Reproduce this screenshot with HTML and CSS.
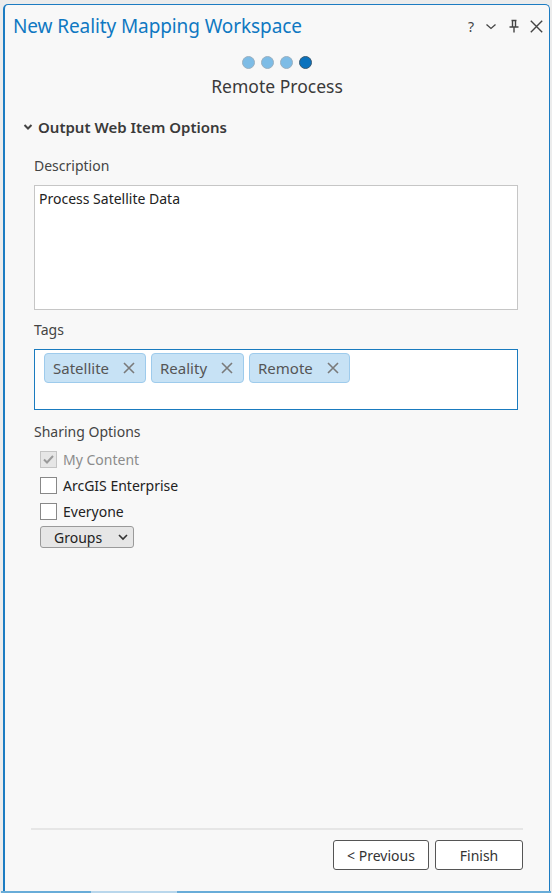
FILE: index.html
```html
<!DOCTYPE html>
<html lang="en">
<head>
  <meta charset="UTF-8" />
  <title>New Reality Mapping Workspace</title>
  <link rel="stylesheet" href="styles.css">
</head>
<body>
  <div class="pane">
    <header class="pane-head">
      <h1 class="pane-title">New Reality Mapping Workspace</h1>
      <div class="pane-tools">
        <span class="tool tool-help">?</span>
        <svg class="tool tool-menu" width="10" height="12" viewBox="0 0 10 12"><path d="M0.5 4.5 L5 8.5 L9.5 4.5" fill="none" stroke="#444" stroke-width="1.3"/></svg>
        <svg class="tool tool-pin" width="10" height="14" viewBox="0 0 10 14"><path d="M2.5 1.5 H7.5 M3.5 1.5 V8 M6.5 1.5 V8 M0.5 8 H9.5 M5 8 V13.5" fill="none" stroke="#444" stroke-width="1.4"/></svg>
        <svg class="tool tool-close" width="13" height="13" viewBox="0 0 13 13"><path d="M0.8 0.8 L12.2 12.2 M12.2 0.8 L0.8 12.2" fill="none" stroke="#444" stroke-width="1.4"/></svg>
      </div>
    </header>

    <div class="steps">
      <span class="dot"></span>
      <span class="dot"></span>
      <span class="dot"></span>
      <span class="dot current"></span>
    </div>
    <div class="step-name">Remote Process</div>

    <section class="group">
      <div class="group-head">
        <svg width="10" height="8" viewBox="0 0 10 8"><path d="M1.5 2 L5 5.5 L8.5 2" fill="none" stroke="#444" stroke-width="2"/></svg>
        Output Web Item Options
      </div>

      <div class="field">
        <label class="field-label">Description</label>
        <div class="textbox">Process Satellite Data</div>
      </div>

      <div class="field">
        <label class="field-label">Tags</label>
        <div class="tagbox">
          <span class="tag">Satellite <svg class="tag-x" width="12" height="12" viewBox="0 0 12 12"><path d="M1 1 L11 11 M11 1 L1 11" fill="none" stroke="#7a7a7a" stroke-width="1.6"/></svg></span>
          <span class="tag">Reality <svg class="tag-x" width="12" height="12" viewBox="0 0 12 12"><path d="M1 1 L11 11 M11 1 L1 11" fill="none" stroke="#7a7a7a" stroke-width="1.6"/></svg></span>
          <span class="tag">Remote <svg class="tag-x" width="12" height="12" viewBox="0 0 12 12"><path d="M1 1 L11 11 M11 1 L1 11" fill="none" stroke="#7a7a7a" stroke-width="1.6"/></svg></span>
        </div>
      </div>

      <div class="field sharing">
        <label class="field-label">Sharing Options</label>
        <div class="check disabled">
          <span class="box"><svg width="13" height="13" viewBox="0 0 13 13"><path d="M2 6.5 L5 9.5 L11 3" fill="none" stroke="#9a9a9a" stroke-width="2"/></svg></span>
          My Content
        </div>
        <div class="check"><span class="box"></span>ArcGIS Enterprise</div>
        <div class="check"><span class="box"></span>Everyone</div>
        <div class="select">
          Groups
          <svg width="10" height="8" viewBox="0 0 10 8"><path d="M1 2 L5 6 L9 2" fill="none" stroke="#333" stroke-width="1.6"/></svg>
        </div>
      </div>
    </section>

    <footer class="pane-foot">
      <button class="btn btn-prev">&lt; Previous</button>
      <button class="btn btn-finish">Finish</button>
    </footer>
  </div>
  <div class="tabstrip">
    <span class="tab"></span>
    <span class="tab active"></span>
    <span class="tab rest"></span>
  </div>
</body>
</html>
```

FILE: styles.css
```css
body {
  margin: 0;
  height: 893px;
  background: #ececec;
  font-family: 'Noto Sans', 'Open Sans', sans-serif;
  font-size: 14px;
  color: #333;
  display: flex;
  flex-direction: column;
  overflow: hidden;
}
.pane {
  margin: 4px 2px 0 3px;
  flex: 1;
  background: #f8f8f8;
  border: 1px solid #1c7cc2;
  border-bottom: none;
  border-left-width: 2px;
  border-radius: 5px 5px 0 0;
  display: flex;
  flex-direction: column;
}
.tabstrip {
  display: flex;
  height: 2px;
  margin: 0 1px;
}
.tab { width: 90px; background: #68acd8; }
.tab.active { width: 86px; background: #b9d7ec; }
.tab.rest { flex: 1; }

/* header */
.pane-head {
  display: flex;
  align-items: center;
  justify-content: space-between;
  height: 42px;
  padding: 0 6px 0 8px;
}
.pane-title {
  margin: 0;
  font-size: 19px;
  font-weight: 400;
  color: #0f78c2;
  letter-spacing: -0.1px;
}
.pane-tools {
  display: flex;
  align-items: center;
}
.tool-help {
  font-size: 14px;
  color: #444;
}
.tool-menu { margin-left: 12px; }
.tool-pin { margin-left: 13px; }
.tool-close { margin-left: 11px; }

/* step dots */
.steps {
  display: flex;
  justify-content: center;
  gap: 6px;
  margin-top: 9px;
}
.dot {
  width: 11px;
  height: 11px;
  border-radius: 50%;
  background: #7dbce6;
  border: 1px solid #9ab0c0;
}
.dot.current {
  background: #0a72bd;
  border-color: #3a5a72;
}
.step-name {
  text-align: center;
  font-size: 17.5px;
  color: #3a3a3a;
  margin-top: 5px;
}

/* option group */
.group {
  padding: 0 31px 0 18px;
  flex: 1;
}
.group-head {
  display: flex;
  align-items: center;
  gap: 5px;
  margin-top: 19px;
  font-size: 15px;
  font-weight: 600;
  color: #3a3a3a;
}
.field {
  padding-left: 11px;
  margin-top: 19px;
}
.field + .field { margin-top: 10px; }
.field.sharing { margin-top: 12px; }
.field-label {
  display: block;
  color: #444;
  margin-bottom: 10px;
}
.sharing .field-label { margin-bottom: 5px; }
.textbox {
  height: 117px;
  background: #fff;
  border: 1px solid #c6c6c6;
  padding: 3px 4px;
  color: #222;
}
.tagbox {
  height: 53px;
  background: #fff;
  border: 1px solid #1a7bbf;
  padding: 3px 9px;
  display: flex;
  align-items: flex-start;
  gap: 5px;
}
.tag {
  display: flex;
  align-items: center;
  gap: 14px;
  height: 28px;
  padding: 0 10px 0 8px;
  background: #c7e2f5;
  border: 1px solid #9ecbec;
  border-radius: 4px;
  font-size: 15px;
  color: #555;
}
.check {
  display: flex;
  align-items: center;
  gap: 6px;
  height: 26px;
  padding-left: 6px;
  color: #222;
}
.check.disabled { color: #8c8c8c; }
.box {
  width: 15px;
  height: 15px;
  border: 1px solid #888;
  background: #fff;
  display: flex;
  align-items: center;
  justify-content: center;
}
.check.disabled .box {
  background: #e6e6e6;
  border-color: #c4c4c4;
}
.select {
  display: inline-flex;
  align-items: center;
  gap: 16px;
  height: 20px;
  margin: 2px 0 0 6px;
  padding: 0 5px 0 13px;
  background: #e6e6e6;
  border: 1px solid #9a9a9a;
  border-radius: 3px;
  color: #222;
}

/* footer buttons */
.pane-foot {
  display: flex;
  justify-content: flex-end;
  gap: 6px;
  margin: 0 26px;
  padding: 10px 0 21px;
  border-top: 2px solid #e6e6e6;
}
.btn {
  font-family: inherit;
  font-size: 14px;
  color: #333;
  background: #fff;
  border: 1px solid #555;
  border-radius: 3px;
  height: 30px;
  padding: 0;
}
.btn-prev { width: 96px; }
.btn-finish { width: 88px; }
```
